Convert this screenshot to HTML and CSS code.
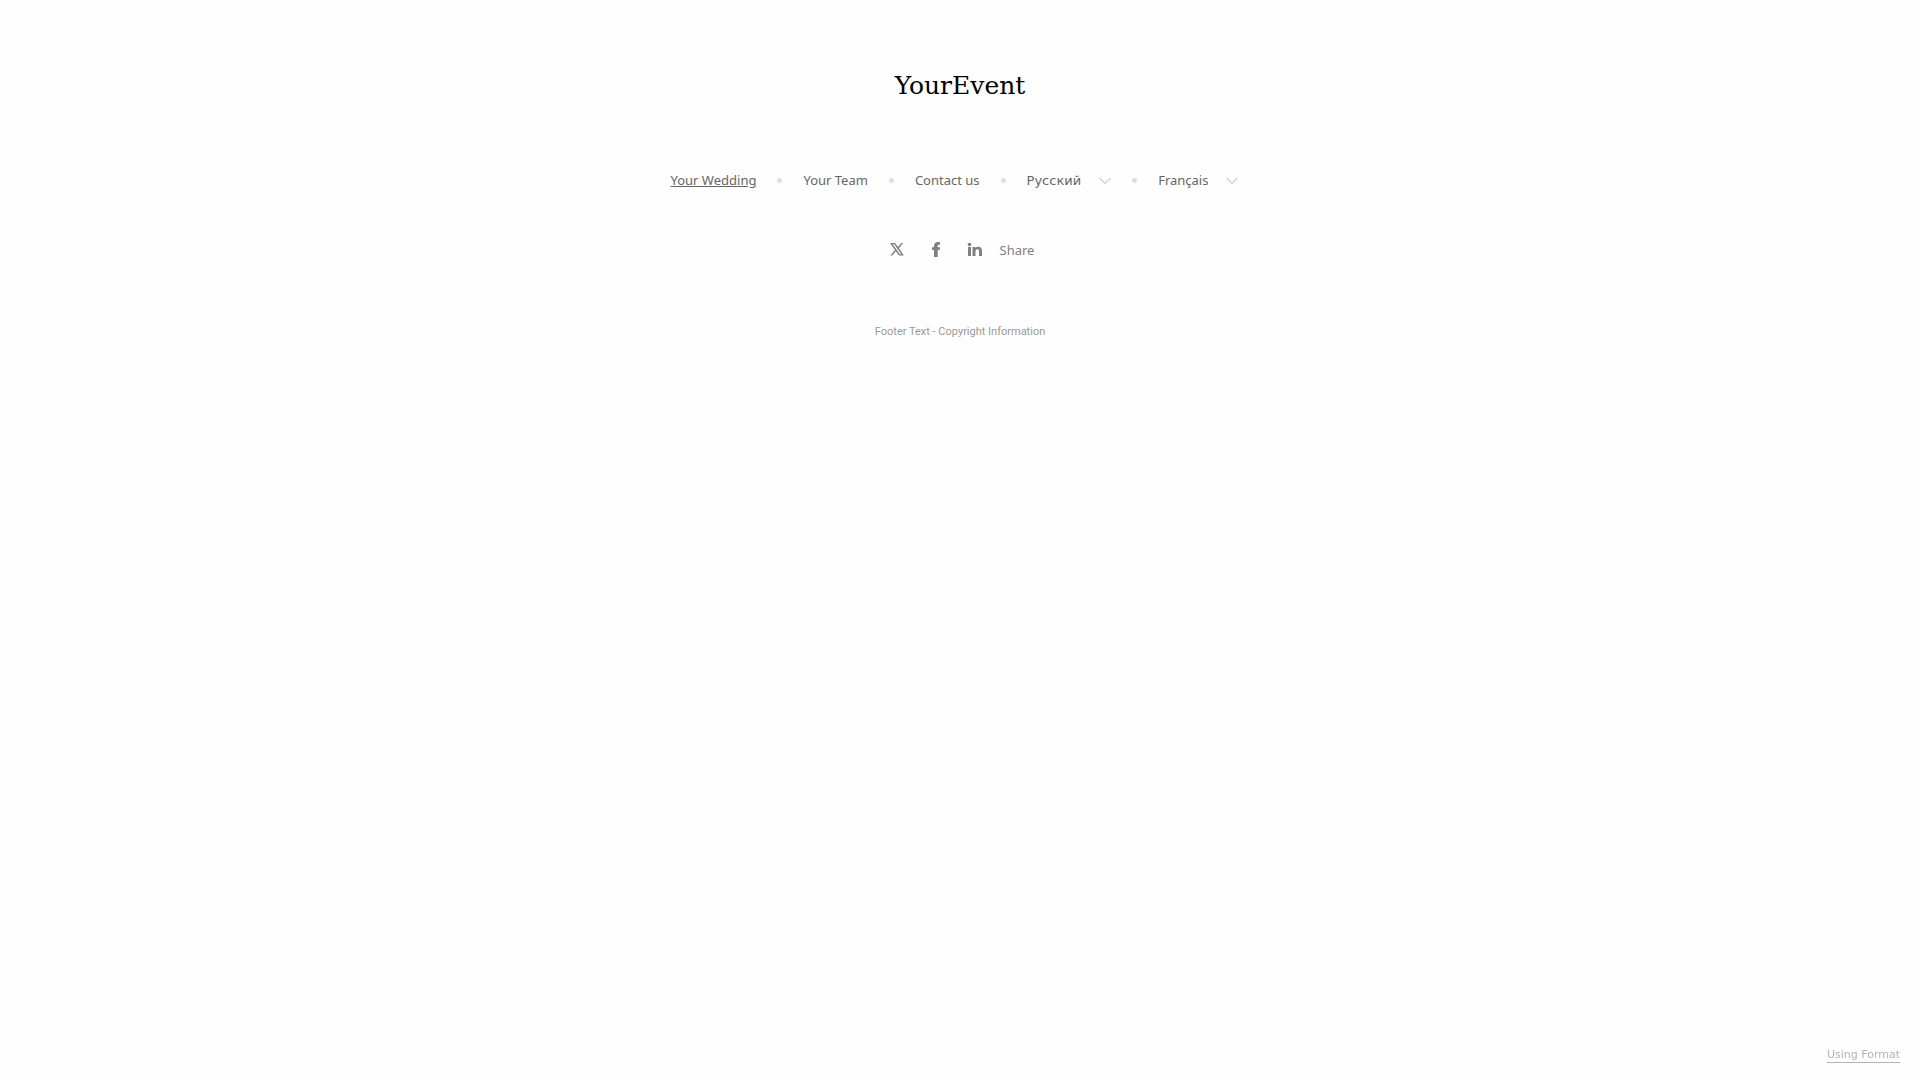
FILE: index.html
```html
<!DOCTYPE html>
<html lang="en">

<head>
	<meta charset="UTF-8">
	<meta name="viewport" content="width=device-width, initial-scale=1.0">
	<title>YourEvent</title>
	<link rel="stylesheet" href="styles.css">
</head>

<body>
	<header class="header">
		<h1 class="logo"><a href="#">YourEvent</a></h1>

		<nav class="menu">
			<ul class="menu-list">
				<li class="menu-item"><a class="active" href="#">Your Wedding</a></li>
				<li class="menu-item"><a href="#">Your Team</a></li>
				<li class="menu-item"><a href="#">Contact us</a></li>
				<li class="menu-item">
					<a href="#"><span lang="ru">Русский</span></a>
					<svg class="arrow" viewBox="0 0 12 10"><path d="M0.5 3 L6 8.500 L11.5 3" /></svg>
				</li>
				<li class="menu-item">
					<a href="#" lang="fr">Français</a>
					<svg class="arrow" viewBox="0 0 12 10"><path d="M0.5 3 L6 8.500 L11.5 3" /></svg>
				</li>
			</ul>
		</nav>
	</header>

	<footer class="footer">
		<div class="social">
			<a class="social-link" href="#" aria-label="X">
				<svg viewBox="0 0 16 16"><path fill-rule="evenodd" d="M1 1h5l3 4L12.200 1h1.900L9.900 6.300l5 7.200H10L6.800 9.300 3.300 13.500H1.300l4.600-5.500zM3.700 2.200l7.200 10.100h1.400L5.200 2.200z" /></svg>
			</a>
			<a class="social-link" href="#" aria-label="Facebook">
				<svg viewBox="0 0 16 16"><path d="M6 15V8H4V5.300h2V4C6 1.500 7.500 0 10 0H12v2.800h-1.200C10 2.800 9.700 3.200 9.700 3.900v1.400H12L11.700 8h-2v7z" /></svg>
			</a>
			<a class="social-link" href="#" aria-label="LinkedIn">
				<svg viewBox="0 0 16 16"><circle cx="2.500" cy="2.500" r="1.800" /><path d="M1 5h3v9H1zM5.500 5h2.900v1.200C9 5.300 10 4.800 11.300 4.800c2.500 0 3.700 1.600 3.700 4V14h-3V9.400c0-1.300-.4-2.100-1.600-2.100S8.500 8.100 8.500 9.400V14h-3z" /></svg>
			</a>
			<a class="share" href="#">Share</a>
		</div>

		<p class="copyright">Footer Text - Copyright Information</p>
	</footer>

	<a class="badge" href="#">Using Format</a>
</body>

</html>
```

FILE: styles.css
```css
* {
	margin: 0;
	padding: 0;
	box-sizing: border-box;
}

body {
	font-family: 'Noto Sans', 'Open Sans', sans-serif;
	font-size: 13px;
	line-height: 20px;
	color: #666;
	background: #fefefe;
	padding: 67px 20px 20px;
}

a {
	color: inherit;
	text-decoration: none;
}

.logo {
	font-family: 'DejaVu Serif', serif;
	font-size: 25px;
	font-weight: 400;
	line-height: 38px;
	text-align: center;
	color: #000;
}

.menu {
	margin-top: 65px;
	padding-right: 11px;
}

.menu-list {
	display: flex;
	flex-wrap: wrap;
	justify-content: center;
	list-style: none;
}

.menu-item {
	display: flex;
	align-items: center;
}

/* dot between the menu links */
.menu-item + .menu-item::before {
	content: "";
	width: 5px;
	height: 5px;
	margin: 0 21px;
	border-radius: 50%;
	background: #ddd;
}

.menu-item .active {
	text-decoration: underline;
}

.menu-item [lang="ru"] {
	font-family: 'DejaVu Sans', sans-serif;
	line-height: 1;
}

.arrow {
	width: 12px;
	height: 10px;
	margin-left: 18px;
	fill: none;
	stroke: #aaa;
}

.social {
	display: flex;
	justify-content: center;
	align-items: center;
	margin-top: 50px;
	padding-left: 3px;
	color: #808080;
}

.social-link {
	display: flex;
	margin-right: 23px;
}

.social-link svg {
	width: 16px;
	height: 16px;
	fill: currentColor;
}

.share {
	margin-left: -6px;
}

.copyright {
	margin-top: 62px;
	font-family: Roboto, sans-serif;
	font-size: 11px;
	text-align: center;
	color: #999;
}

.badge {
	position: fixed;
	right: 20px;
	bottom: 17px;
	font-family: 'DejaVu Sans', sans-serif;
	font-size: 11px;
	line-height: 14px;
	color: #b3b3b3;
	border-bottom: 1px solid #b3b3b3;
}
```
